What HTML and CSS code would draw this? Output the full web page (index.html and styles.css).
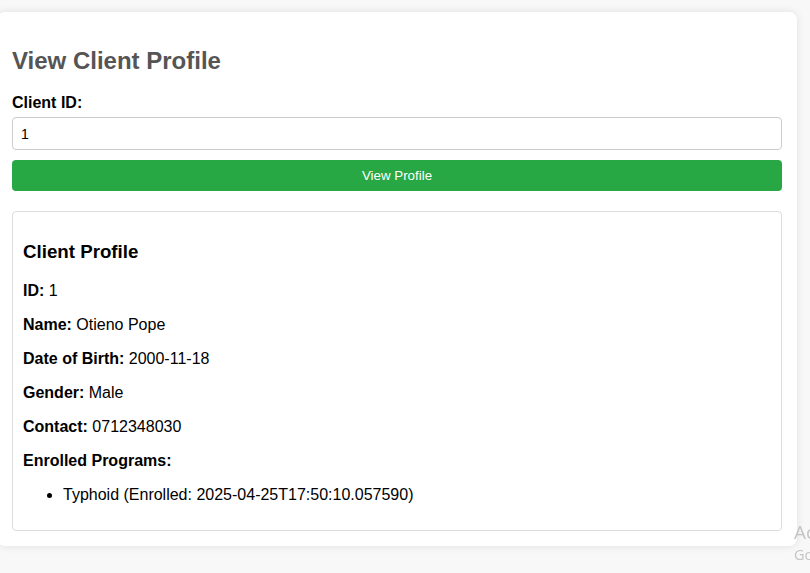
FILE: index.html
```html
<!DOCTYPE html>
<html lang="en">
<head>
<meta charset="utf-8">
<title>View Client Profile</title>
<link rel="stylesheet" href="styles.css">
</head>
<body>
<div class="page">
  <div class="card">
    <h2 class="title">View Client Profile</h2>
    <label class="label" for="clientId">Client ID:</label>
    <input class="input" id="clientId" type="text" value="1">
    <button class="btn" type="button">View Profile</button>
    <div class="profile">
      <h3 class="profile-title">Client Profile</h3>
      <p class="row"><strong>ID:</strong> 1</p>
      <p class="row"><strong>Name:</strong> Otieno Pope</p>
      <p class="row"><strong>Date of Birth:</strong> 2000-11-18</p>
      <p class="row"><strong>Gender:</strong> Male</p>
      <p class="row"><strong>Contact:</strong> 0712348030</p>
      <p class="row"><strong>Enrolled Programs:</strong></p>
      <ul class="programs">
        <li>Typhoid (Enrolled: 2025-04-25T17:50:10.057590)</li>
      </ul>
    </div>
  </div>
</div>
<div class="watermark">
  <div class="wm-title">Activate Windows</div>
  <div class="wm-sub">Go to Settings to activate Windows.</div>
</div>
</body>
</html>
```
FILE: styles.css
```css
html, body {
  margin: 0;
  padding: 0;
  height: 100%;
  overflow: hidden;
}
body {
  background: #f8f8f8;
  font-family: "Liberation Sans", Arial, sans-serif;
  color: #000;
  font-size: 16px;
}
.page {
  padding-top: 12px;
}
.card {
  width: 770px;
  margin-left: -3px;
  padding: 15px 15px 15px;
  background: #fff;
  border-radius: 8px;
  box-shadow: 0 0 8px rgba(0, 0, 0, 0.1);
}
.title {
  margin: 20px 0 19px;
  font-size: 24px;
  font-weight: bold;
  color: #555;
}
.label {
  display: block;
  font-weight: bold;
  margin-bottom: 5px;
}
.input {
  display: block;
  box-sizing: border-box;
  width: 100%;
  height: 33px;
  padding: 8px;
  border: 1px solid #ccc;
  border-radius: 4px;
  font-family: "Liberation Sans", Arial, sans-serif;
  font-size: 14px;
  color: #000;
  outline: none;
}
.btn {
  display: block;
  width: 100%;
  height: 31px;
  margin-top: 10px;
  padding: 8px;
  border: none;
  border-radius: 4px;
  background: #28a745;
  color: #fff;
  font-family: "Liberation Sans", Arial, sans-serif;
  font-size: 13.33px;
}
.profile {
  margin-top: 20px;
  padding: 10px;
  border: 1px solid #ddd;
  border-radius: 4px;
}
.profile-title {
  font-size: 18.72px;
  margin: 18.72px 0 19.72px;
}
.row {
  margin: 16px 0;
}
.programs {
  margin: 16px 0;
  padding-left: 40px;
}
.watermark {
  position: fixed;
  left: 794px;
  top: 519px;
  color: #c4c4c4;
  font-family: "Open Sans", "Noto Sans", sans-serif;
  white-space: nowrap;
}
.wm-title {
  font-size: 19px;
  line-height: 26px;
}
.wm-sub {
  font-size: 14.5px;
  line-height: 20px;
}
```
